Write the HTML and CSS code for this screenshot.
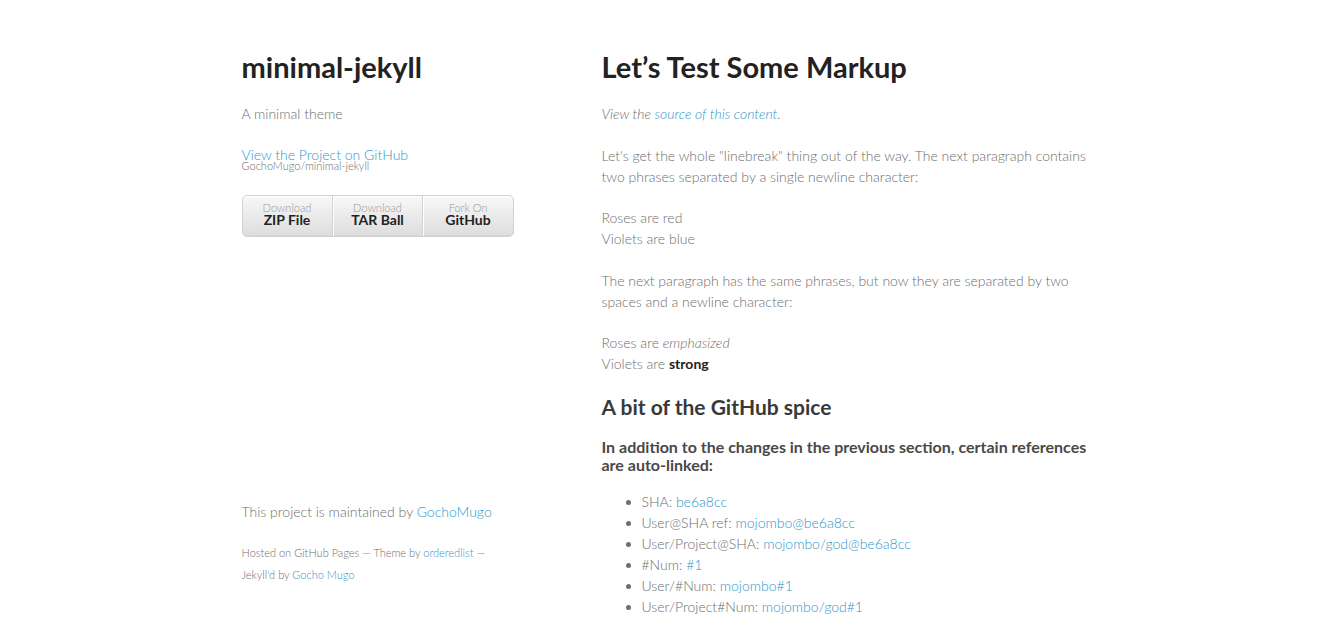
FILE: index.html
```html
<!DOCTYPE html>
<html>
<head>
<meta charset="utf-8">
<title>minimal-jekyll</title>
<link rel="stylesheet" href="styles.css">
</head>
<body>
<div class="wrapper">
  <aside class="sidebar">
    <header class="site-header">
      <h1>minimal-jekyll</h1>
      <p>A minimal theme</p>
      <p class="project"><a href="#">View the Project on GitHub <small>GochoMugo/minimal-jekyll</small></a></p>
      <ul class="downloads">
        <li><a href="#">Download <strong>ZIP File</strong></a></li>
        <li><a href="#">Download <strong>TAR Ball</strong></a></li>
        <li><a href="#">Fork On <strong>GitHub</strong></a></li>
      </ul>
    </header>
    <footer class="site-footer">
      <p>This project is maintained by <a href="#">GochoMugo</a></p>
      <p class="credits">Hosted on GitHub Pages &mdash; Theme by <a href="#">orderedlist</a> &mdash; Jekyll'd by <a href="#">Gocho Mugo</a></p>
    </footer>
  </aside>
  <section class="content">
    <h1>Let’s Test Some Markup</h1>
    <p><em>View the <a href="#">source of this content</a>.</em></p>
    <p>Let's get the whole "linebreak" thing out of the way. The next paragraph contains two phrases separated by a single newline character:</p>
    <p>Roses are red<br>Violets are blue</p>
    <p>The next paragraph has the same phrases, but now they are separated by two spaces and a newline character:</p>
    <p>Roses are <em>emphasized</em><br>Violets are <strong>strong</strong></p>
    <h2>A bit of the GitHub spice</h2>
    <h3>In addition to the changes in the previous section, certain references are auto-linked:</h3>
    <ul class="refs">
      <li>SHA: <a href="#">be6a8cc</a></li>
      <li>User@SHA ref: <a href="#">mojombo@be6a8cc</a></li>
      <li>User/Project@SHA: <a href="#">mojombo/god@be6a8cc</a></li>
      <li>#Num: <a href="#">#1</a></li>
      <li>User/#Num: <a href="#">mojombo#1</a></li>
      <li>User/Project#Num: <a href="#">mojombo/god#1</a></li>
    </ul>
  </section>
</div>
</body>
</html>
```
FILE: styles.css
```css
html, body {
  margin: 0;
}
body {
  padding: 50px 50px 0;
  font: 300 14px/1.5 Lato, "Liberation Sans", sans-serif;
  color: #6e6e6e;
  background: #fff;
}
h1, h2, h3 {
  margin: 0 0 20px;
  line-height: 1.1;
  font-weight: 700;
}
h1 { font-size: 29px; line-height: 33px; color: #222; }
h2 { font-size: 21px; line-height: 23px; color: #393939; }
h3 { font-size: 16px; line-height: 18px; color: #494949; margin-bottom: 17px; }
p, ul { margin: 0 0 20px; }
.content p { margin-bottom: 20.5px; }
a {
  color: #2f96cb;
  font-weight: 300;
  text-decoration: none;
}
a small {
  font-size: 11px;
  color: #6e6e6e;
  margin-top: -0.6em;
  display: block;
  font-weight: 300;
}
strong { color: #222; font-weight: 700; }
em { font-style: italic; }

.wrapper {
  width: 860px;
  margin: 0 auto;
  display: flex;
  justify-content: space-between;
  align-items: flex-start;
}
.sidebar {
  width: 270px;
  height: calc(100vh - 100px);
  display: flex;
  flex-direction: column;
}
.site-footer {
  margin-top: auto;
}
.site-footer .credits {
  margin: 0;
  font-size: 11px;
  line-height: 22px;
}
.downloads {
  list-style: none;
  height: 40px;
  padding: 0;
  width: 270px;
  display: flex;
  background: linear-gradient(to bottom, #f8f8f8 0%, #dddddd 100%);
  border-radius: 5px;
  border: 1px solid #d2d2d2;
  box-shadow: inset #fff 0 1px 0, inset rgba(0,0,0,0.03) 0 -1px 0;
}
.downloads li {
  width: 89px;
  border-right: 1px solid #d2d2d2;
  height: 40px;
}
.downloads li + li {
  width: 88px;
  border-left: 1px solid #fff;
}
.downloads li + li + li {
  border-right: none;
  width: 89px;
}
.downloads a {
  line-height: 1;
  font-size: 11px;
  color: #999;
  display: block;
  text-align: center;
  padding-top: 6px;
  height: 34px;
}
.downloads a strong {
  font-size: 14px;
  display: block;
  color: #222;
}
.content {
  width: 500px;
}
.refs {
  padding-left: 40px;
  margin-bottom: 0;
}
```
